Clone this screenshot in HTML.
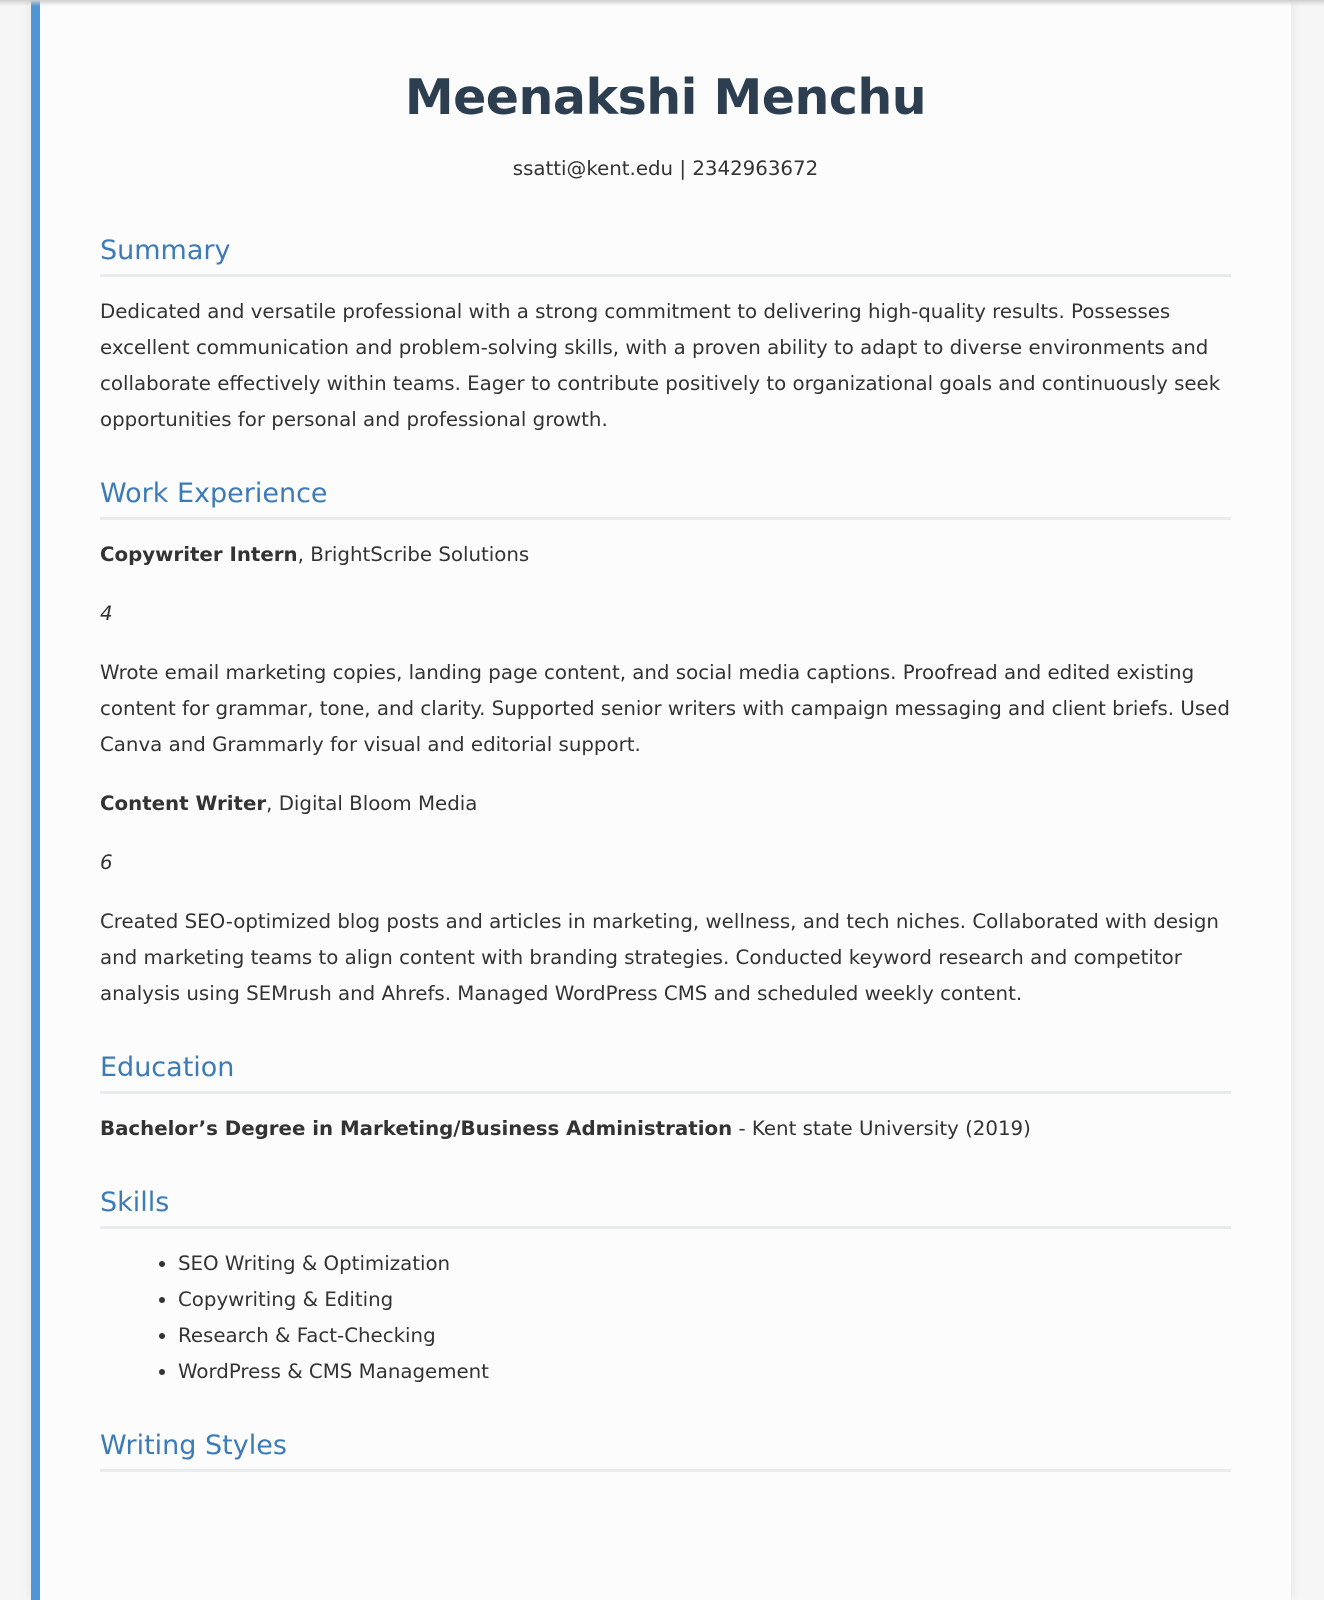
<!DOCTYPE html>
<html><head><meta charset="utf-8">
<style>
html,body{margin:0;padding:0;}
body{background:#f6f6f6;width:1324px;height:1478px;overflow:hidden;font-family:"DejaVu Sans","Liberation Sans",sans-serif;color:#333;position:relative;}
.topshadow{position:absolute;left:0;top:0;width:1324px;height:6px;background:linear-gradient(#cfcfcf,rgba(246,246,246,0));z-index:2;}
.wrap{position:absolute;left:31px;top:-20px;width:1131px;padding:20px 60px 0 60px;border-left:9px solid #5196d4;background:#fcfcfc;box-shadow:0 0 12px rgba(0,0,0,0.08);height:1600px;box-sizing:content-box;}
h1{margin:0;text-align:center;font-size:49px;line-height:60px;color:#2c3e50;font-weight:bold;padding-top:68px;letter-spacing:-0.5px;}
.contact{text-align:center;font-size:19.8px;line-height:36px;margin:23px 0 0 0;}
h2{font-size:27px;font-weight:normal;color:#3c7bb8;line-height:34px;margin:39px 0 17px 0;padding-bottom:6px;border-bottom:3px solid #e8ecec;}
p{font-size:19.8px;line-height:36px;margin:0 0 23px 0;}
em{font-style:italic;}
ul{margin:0;padding-left:78px;font-size:19.8px;line-height:36px;}
</style></head><body>
<div class="topshadow"></div>
<div class="wrap">
<h1>Meenakshi Menchu</h1>
<div class="contact">ssatti@kent.edu | 2342963672</div>
<h2 style="margin-top:47px">Summary</h2>
<p>Dedicated and versatile professional with a strong commitment to delivering high-quality results. Possesses excellent communication and problem-solving skills, with a proven ability to adapt to diverse environments and collaborate effectively within teams. Eager to contribute positively to organizational goals and continuously seek opportunities for personal and professional growth.</p>
<h2>Work Experience</h2>
<p><b>Copywriter Intern</b>, BrightScribe Solutions</p>
<p><em>4</em></p>
<p>Wrote email marketing copies, landing page content, and social media captions. Proofread and edited existing content for grammar, tone, and clarity. Supported senior writers with campaign messaging and client briefs. Used Canva and Grammarly for visual and editorial support.</p>
<p><b>Content Writer</b>, Digital Bloom Media</p>
<p><em>6</em></p>
<p>Created SEO-optimized blog posts and articles in marketing, wellness, and tech niches. Collaborated with design and marketing teams to align content with branding strategies. Conducted keyword research and competitor analysis using SEMrush and Ahrefs. Managed WordPress CMS and scheduled weekly content.</p>
<h2>Education</h2>
<p><b>Bachelor’s Degree in Marketing/Business Administration</b> - Kent state University (2019)</p>
<h2>Skills</h2>
<ul><li>SEO Writing &amp; Optimization</li><li>Copywriting &amp; Editing</li><li>Research &amp; Fact-Checking</li><li>WordPress &amp; CMS Management</li></ul>
<h2>Writing Styles</h2>
</div>
</body></html>
